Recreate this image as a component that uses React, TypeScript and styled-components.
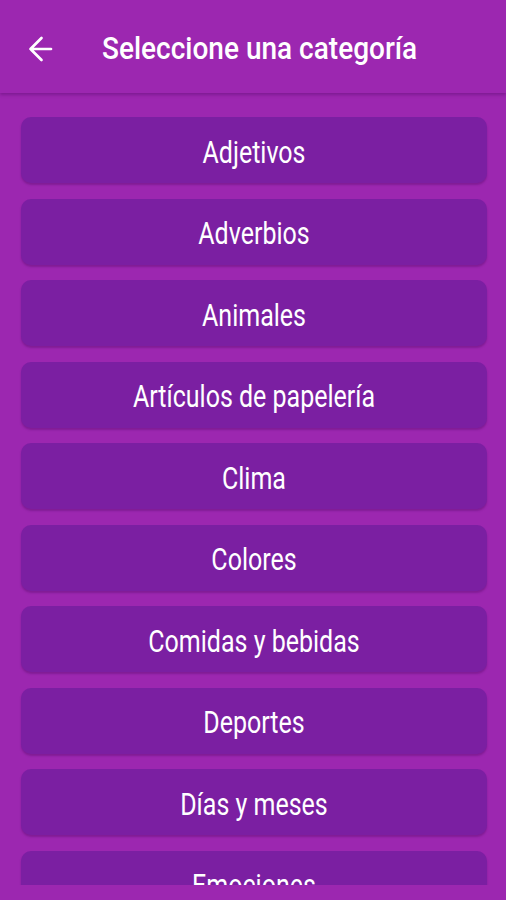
import React from "react";
import styled, { createGlobalStyle } from "styled-components";

const Global = createGlobalStyle`
  html, body { margin: 0; padding: 0; }
  body { background: #9c27b0; font-family: Roboto, "Noto Sans", sans-serif; }
`;

const Screen = styled.div`
  width: 506px;
  height: 900px;
  background: #9c27b0;
  display: flex;
  flex-direction: column;
  overflow: hidden;
`;

const Header = styled.header`
  height: 93px;
  flex: none;
  display: flex;
  align-items: center;
  background: #9c27b0;
  box-shadow: 0 2px 3px rgba(90, 10, 110, 0.45);
  position: relative;
  z-index: 1;
`;

const BackButton = styled.button`
  width: 80px;
  height: 93px;
  border: none;
  background: transparent;
  padding: 5px 0 0 28px;
  display: flex;
  align-items: center;
  color: #fff;
  cursor: pointer;
`;

const Title = styled.h1`
  margin: 4px 0 0 22px;
  color: #fff;
  font-size: 28px;
  font-weight: 500;
  letter-spacing: 0;
  display: inline-block;
  transform: scaleY(1.15);
`;

const ListViewport = styled.div`
  flex: none;
  height: 792px;
  overflow: hidden;
`;

const List = styled.div`
  display: flex;
  flex-direction: column;
  gap: 15.5px;
  padding: 24px 19px 0 21px;
`;

const CategoryButton = styled.button`
  height: 66px;
  flex: none;
  border: none;
  border-radius: 10px;
  background: #7b1fa2;
  color: #fff;
  font-family: Roboto, "Noto Sans", sans-serif;
  font-size: 25px;
  font-weight: 400;
  box-shadow: 0 2px 2px rgba(80, 10, 100, 0.35);
  cursor: pointer;
  padding: 4px 0 0;
`;

const Label = styled.span`
  display: inline-block;
  transform: scaleY(1.22);
`;

const categories = [
  "Adjetivos",
  "Adverbios",
  "Animales",
  "Artículos de papelería",
  "Clima",
  "Colores",
  "Comidas y bebidas",
  "Deportes",
  "Días y meses",
  "Emociones",
];

export default function App() {
  return (
    <>
      <Global />
      <Screen>
        <Header>
          <BackButton aria-label="Volver">
            <svg width="25" height="26" viewBox="0 0 25 26" fill="none" stroke="#fff" strokeWidth="2.7" strokeLinecap="round" strokeLinejoin="round">
              <path d="M23 13H2.5M13.5 2L2.5 13L13.5 24" />
            </svg>
          </BackButton>
          <Title>Seleccione una categoría</Title>
        </Header>
        <ListViewport>
          <List>
            {categories.map((c) => (
              <CategoryButton key={c}>
                <Label>{c}</Label>
              </CategoryButton>
            ))}
          </List>
        </ListViewport>
      </Screen>
    </>
  );
}
